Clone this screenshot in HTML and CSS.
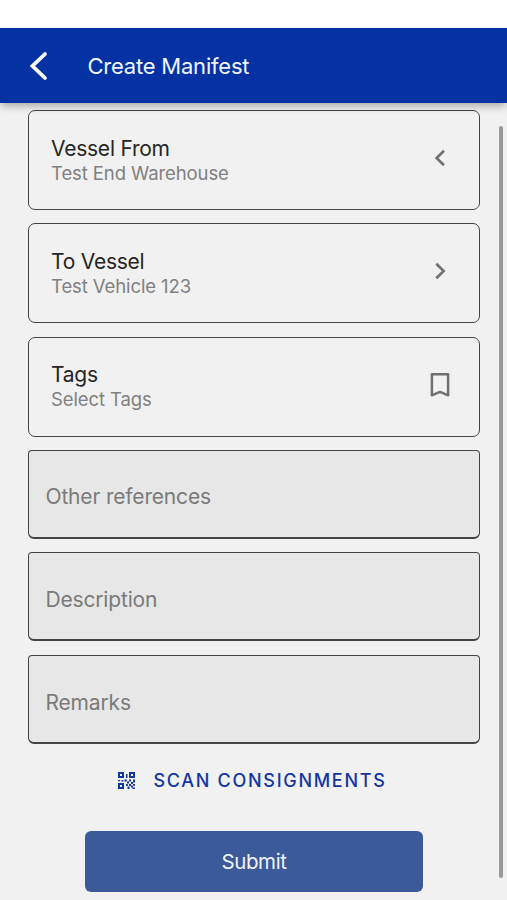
FILE: index.html
```html
<!DOCTYPE html>
<html lang="en">
<head>
<meta charset="utf-8">
<title>Create Manifest</title>
<link rel="stylesheet" href="styles.css">
</head>
<body>
<header class="bar">
  <svg class="back" width="20" height="32" viewBox="0 0 20 32"><path d="M17 4 4.500 16 17 28" fill="none" stroke="#fff" stroke-width="3.800" stroke-linecap="round"/></svg>
  <h1>Create Manifest</h1>
</header>
<main>
  <div class="card">
    <div class="text"><div class="label">Vessel From</div><div class="value">Test End Warehouse</div></div>
    <svg width="28" height="28" viewBox="0 0 28 28"><path d="M18 6.800 10.600 14 18 21.200" fill="none" stroke="#707070" stroke-width="2.600"/></svg>
  </div>
  <div class="card">
    <div class="text"><div class="label">To Vessel</div><div class="value">Test Vehicle 123</div></div>
    <svg width="28" height="28" viewBox="0 0 28 28"><path d="M10.300 6.800 17.700 14 10.300 21.200" fill="none" stroke="#707070" stroke-width="2.600"/></svg>
  </div>
  <div class="card">
    <div class="text"><div class="label">Tags</div><div class="value">Select Tags</div></div>
    <svg width="28" height="28" viewBox="0 0 28 28"><path d="M5.900 3.300H22.100V24.300L14 20.900 5.900 24.300Z" fill="none" stroke="#707070" stroke-width="2.500" stroke-linejoin="round"/></svg>
  </div>
  <div class="field">Other references</div>
  <div class="field">Description</div>
  <div class="field">Remarks</div>
  <div class="scan">
    <svg width="17" height="17" viewBox="0 0 17 17" fill="#1236a0"><path fill-rule="evenodd" d="M0 0h6v6H0zM2 2v2h2V2zM11 0h6v6h-6zM13 2v2h2V2zM0 11h6v6H0zM2 13v2h2v-2z"/><path d="M8 2h1.500v4H8zM0 8h2v1.300H0zM3.500 8h2v1.500h-2zM6.500 7.500h2.300v2H6.500zM9 9.500h2v2H9zM11 7.500h2v2h-2zM15 7.500h2v3h-2zM13 10h2v2h-2zM11 12h2v2h-2zM8 12h1.800v2H8zM9.500 14.500h2V17h-2zM13 13.500h2v2h-2zM15 12h2v1.800h-2zM14.500 15.500H17V17h-2.500z"/></svg>
    <span>SCAN CONSIGNMENTS</span>
  </div>
  <div class="submit">Submit</div>
</main>
<div class="scrollbar"></div>
</body>
</html>
```
FILE: styles.css
```css
* { box-sizing: border-box; }
body {
  margin: 0;
  padding-top: 28px;
  height: 900px;
  overflow: hidden;
  background: linear-gradient(#fff 28px, #f1f1f1 28px);
  font-family: Inter, "Liberation Sans", sans-serif;
}
.bar {
  height: 75px;
  display: flex;
  align-items: center;
  padding-left: 28px;
  background: #0432a3;
  box-shadow: 0 4px 8px -1px rgba(0, 0, 0, .3);
  clip-path: inset(0 0 -16px 0);
}
.back { flex: none; }
h1 {
  margin: 0 0 0 39.5px;
  font-size: 22px;
  font-weight: 400;
  line-height: 28px;
  letter-spacing: -.22px;
  color: #f0f4ff;
}
main { padding: 7px 27px 0 28px; }
.card {
  height: 100px;
  margin-bottom: 13.3px;
  border: 1.5px solid #444;
  border-radius: 7px;
  padding: 0 25px 0 22px;
  display: flex;
  align-items: center;
  justify-content: space-between;
}
.card svg { margin-top: -4px; }
.text { padding-top: .5px; }
.label {
  font-size: 21px;
  line-height: 25px;
  letter-spacing: -.24px;
  color: #252525;
}
.value {
  font-size: 18.5px;
  line-height: 24px;
  letter-spacing: -.1px;
  color: #808080;
}
.field {
  height: 89px;
  margin-bottom: 13.6px;
  border: 1.5px solid #444;
  border-bottom-width: 2px;
  border-radius: 4px 4px 6px 6px;
  padding: 6px 0 0 16.5px;
  display: flex;
  align-items: center;
  background: #e7e7e7;
  color: #7a7a7a;
  font-size: 21px;
  letter-spacing: -.17px;
}
.scan {
  height: 28px;
  margin-top: 22px;
  display: flex;
  align-items: center;
  gap: 18.5px;
  padding-left: 90px;
  color: #1236a0;
  font-size: 18px;
  font-weight: 500;
  letter-spacing: 1.7px;
}
.submit {
  width: 338px;
  height: 61px;
  margin: 37px 0 0 57px;
  border-radius: 6px;
  display: flex;
  align-items: center;
  justify-content: center;
  background: #3c5999;
  color: #edf3ff;
  font-size: 20.5px;
  letter-spacing: -.4px;
}
.scrollbar {
  position: absolute;
  left: 499px;
  top: 126px;
  width: 4px;
  height: 752px;
  border-radius: 2px;
  background: #999;
}
```
